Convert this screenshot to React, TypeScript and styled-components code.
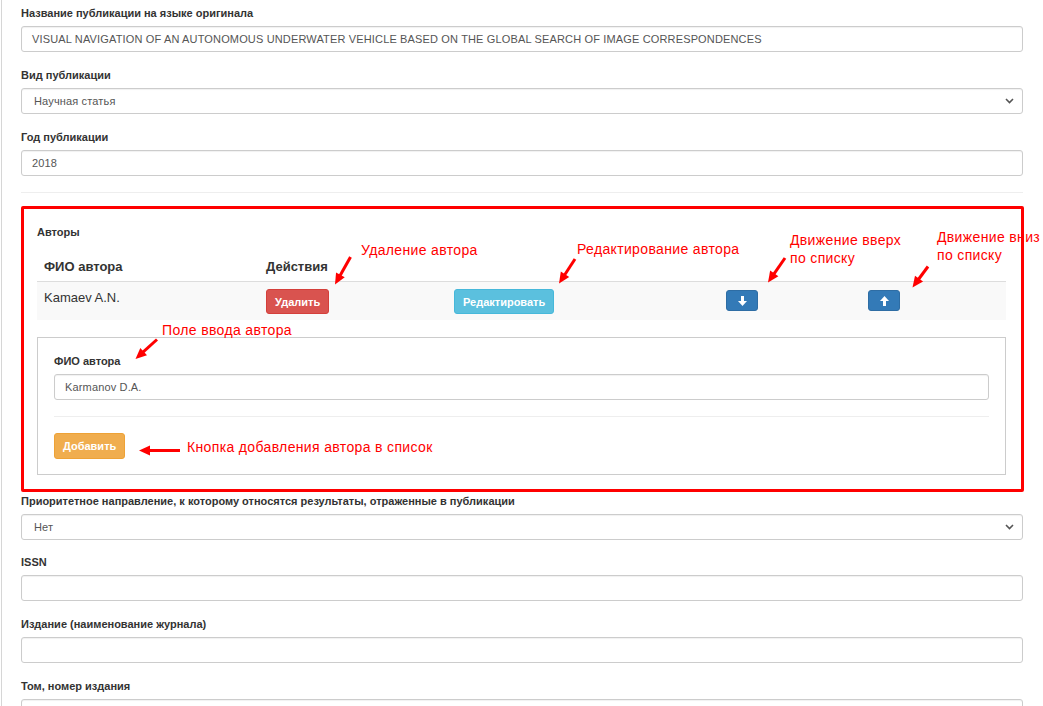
import React from "react";
import styled, { createGlobalStyle, css } from "styled-components";

const GlobalStyle = createGlobalStyle`
  html, body {
    margin: 0;
    padding: 0;
    background: #fff;
    overflow: hidden;
  }
  body {
    font-family: "Liberation Sans", Arial, sans-serif;
    color: #333;
  }
  * { box-sizing: border-box; }
`;

const Page = styled.div`
  position: relative;
  width: 1043px;
  height: 706px;
  overflow: hidden;
`;

const Frame = styled.div`
  margin-left: 1px;
  border-left: 1px solid #d6d6d6;
  padding: 6px 0 0 19px;
  height: 100%;
`;

const Form = styled.div`
  width: 1002px;
`;

const Group = styled.div<{ $mb?: number }>`
  margin-bottom: ${(p) => (p.$mb ?? 16)}px;
`;

const Label = styled.div`
  font-size: 11px;
  font-weight: bold;
  line-height: 15px;
  margin-bottom: 5px;
  color: #333;
`;

const Field = styled.div`
  height: 26px;
  border: 1px solid #ccc;
  border-radius: 3px;
  box-shadow: inset 0 1px 1px rgba(0, 0, 0, 0.06);
  display: flex;
  align-items: center;
  justify-content: space-between;
  padding: 0 8px 0 10px;
  font-size: 11px;
  letter-spacing: 0.15px;
  color: #555;
  background: #fff;
`;

const SelectField = styled(Field)`
  padding-left: 12px;
`;

const Divider = styled.div<{ $mt?: number; $mb?: number }>`
  border-top: 1px solid #eee;
  margin: ${(p) => p.$mt ?? 0}px 0 ${(p) => p.$mb ?? 0}px;
`;

const AuthorsBox = styled.div`
  width: 1003px;
  border: 3px solid #ff0000;
  border-radius: 2px;
  padding: 16px 15px 14px 13px;
  margin-bottom: 2px;
`;

const TableRow = styled.div<{ $head?: boolean }>`
  display: grid;
  grid-template-columns: 222px 188px 272px 142px 1fr;
  ${(p) =>
    p.$head
      ? css`
          border-bottom: 1px solid #ddd;
          font-weight: bold;
          margin-top: 11px;
        `
      : css`
          background: #f9f9f9;
          margin-bottom: 17px;
        `}
`;

const Cell = styled.div<{ $head?: boolean }>`
  font-size: 13px;
  line-height: 18px;
  padding: ${(p) => (p.$head ? "7px 7px 5px" : "7px 8px 6px 7px")};
  color: #333;
`;

const variants = {
  danger: { bg: "#d9534f", border: "#d43f3a" },
  info: { bg: "#5bc0de", border: "#46b8da" },
  primary: { bg: "#337ab7", border: "#2e6da4" },
  warning: { bg: "#f0ad4e", border: "#eea236" },
};

const Btn = styled.button<{ $v: keyof typeof variants; $h?: number }>`
  height: ${(p) => p.$h ?? 25}px;
  padding: 0 8px;
  border-radius: 3px;
  border: 1px solid ${(p) => variants[p.$v].border};
  background: ${(p) => variants[p.$v].bg};
  color: #fff;
  font-family: "Liberation Sans", Arial, sans-serif;
  font-size: 11px;
  font-weight: bold;
  display: inline-flex;
  align-items: center;
  justify-content: center;
  cursor: pointer;
`;

const IconBtn = styled(Btn)`
  width: 32px;
  padding: 0;
  margin-top: 1px;
`;

const Well = styled.div`
  border: 1px solid #ccc;
  padding: 16px 16px 15px;
  background: #fff;
`;

const Note = styled.div<{ $x: number; $y: number }>`
  position: absolute;
  left: ${(p) => p.$x}px;
  top: ${(p) => p.$y}px;
  color: #ff0000;
  font-family: "Liberation Sans", Arial, sans-serif;
  font-size: 14px;
  line-height: 17.5px;
  letter-spacing: 0.35px;
  white-space: nowrap;
`;

const ArrowLayer = styled.svg`
  position: absolute;
  left: 0;
  top: 0;
  pointer-events: none;
`;

const Chevron = () => (
  <svg width="9" height="6" viewBox="0 0 9 6">
    <path d="M1 1l3.5 3.5L8 1" fill="none" stroke="#555" strokeWidth="1.6" />
  </svg>
);

const ArrowIcon = ({ up }: { up?: boolean }) => (
  <svg width="9" height="10" viewBox="0 0 9 10" style={{ transform: up ? "rotate(180deg)" : undefined }}>
    <rect x="3" y="0" width="3" height="6" fill="#fff" />
    <path d="M0 5h9L4.5 10z" fill="#fff" />
  </svg>
);

type Arr = [number, number, number, number];
const arrows: Arr[] = [
  [350.5, 257, 335, 284.5],
  [575, 259, 559, 283.5],
  [785, 258, 768, 282.5],
  [928, 266.5, 912.5, 287.5],
  [157, 339.5, 135.5, 359],
  [180, 450.5, 139, 450.5],
];

function head(a: Arr) {
  const [x1, y1, x2, y2] = a;
  const dx = x2 - x1;
  const dy = y2 - y1;
  const len = Math.hypot(dx, dy);
  const ux = dx / len;
  const uy = dy / len;
  const bx = x2 - ux * 11;
  const by = y2 - uy * 11;
  const w = 5;
  return {
    shaftEnd: [bx + ux * 2, by + uy * 2],
    pts: `${x2},${y2} ${bx - uy * w},${by + ux * w} ${bx + uy * w},${by - ux * w}`,
  };
}

const Annotations = () => (
  <>
    <ArrowLayer width="1043" height="706">
      {arrows.map((a, i) => {
        const h = head(a);
        return (
          <g key={i}>
            <line x1={a[0]} y1={a[1]} x2={h.shaftEnd[0]} y2={h.shaftEnd[1]} stroke="#ff0000" strokeWidth="3" />
            <polygon points={h.pts} fill="#ff0000" />
          </g>
        );
      })}
    </ArrowLayer>
    <Note $x={361} $y={242}>Удаление автора</Note>
    <Note $x={577} $y={241}>Редактирование автора</Note>
    <Note $x={790} $y={232}>
      Движение вверх
      <br />
      по списку
    </Note>
    <Note $x={937} $y={229}>
      Движение вниз
      <br />
      по списку
    </Note>
    <Note $x={162} $y={322}>Поле ввода автора</Note>
    <Note $x={187} $y={439}>Кнопка добавления автора в список</Note>
  </>
);

export default function App() {
  return (
    <Page>
      <GlobalStyle />
      <Frame>
        <Form>
          <Group>
            <Label>Название публикации на языке оригинала</Label>
            <Field>VISUAL NAVIGATION OF AN AUTONOMOUS UNDERWATER VEHICLE BASED ON THE GLOBAL SEARCH OF IMAGE CORRESPONDENCES</Field>
          </Group>
          <Group>
            <Label>Вид публикации</Label>
            <SelectField>
              Научная статья
              <Chevron />
            </SelectField>
          </Group>
          <Group>
            <Label>Год публикации</Label>
            <Field>2018</Field>
          </Group>
          <Divider $mb={13} />

          <AuthorsBox>
            <Label>Авторы</Label>
            <TableRow $head>
              <Cell $head>ФИО автора</Cell>
              <Cell $head>Действия</Cell>
            </TableRow>
            <TableRow>
              <Cell>Kamaev A.N.</Cell>
              <Cell>
                <Btn $v="danger">Удалить</Btn>
              </Cell>
              <Cell>
                <Btn $v="info">Редактировать</Btn>
              </Cell>
              <Cell>
                <IconBtn $v="primary" $h={21}>
                  <ArrowIcon />
                </IconBtn>
              </Cell>
              <Cell>
                <IconBtn $v="primary" $h={21}>
                  <ArrowIcon up />
                </IconBtn>
              </Cell>
            </TableRow>
            <Well>
              <Label>ФИО автора</Label>
              <Field>Karmanov D.A.</Field>
              <Divider $mt={16} $mb={16} />
              <Btn $v="warning" $h={26}>
                Добавить
              </Btn>
            </Well>
          </AuthorsBox>

          <Group $mb={15}>
            <Label>Приоритетное направление, к которому относятся результаты, отраженные в публикации</Label>
            <SelectField>
              Нет
              <Chevron />
            </SelectField>
          </Group>
          <Group>
            <Label>ISSN</Label>
            <Field />
          </Group>
          <Group>
            <Label>Издание (наименование журнала)</Label>
            <Field />
          </Group>
          <Group>
            <Label>Том, номер издания</Label>
            <Field />
          </Group>
        </Form>
      </Frame>
      <Annotations />
    </Page>
  );
}
